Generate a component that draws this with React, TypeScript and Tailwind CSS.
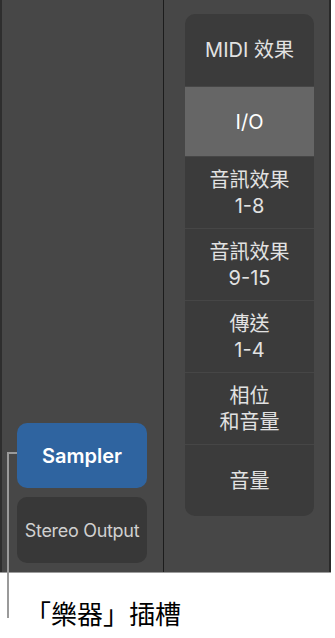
import React from "react"

const font = { fontFamily: 'Inter, "Noto Sans CJK TC", sans-serif' }

interface Slot {
  lines: string[]
  active?: boolean
}

const slots: Slot[] = [
  { lines: ["MIDI 效果"] },
  { lines: ["I/O"], active: true },
  { lines: ["音訊效果", "1-8"] },
  { lines: ["音訊效果", "9-15"] },
  { lines: ["傳送", "1-4"] },
  { lines: ["相位", "和音量"] },
  { lines: ["音量"] },
]

export default function App() {
  return (
    <div className="relative w-[335px] h-[638px] bg-white overflow-hidden" style={font}>
      {/* mixer strip */}
      <div className="flex h-[573px] w-[331px] border-b border-[#9c9c9c]">
        <div className="w-[2px] bg-[#2e2e2e]" />
        <div className="flex w-[161px] flex-col justify-end bg-[#474747] pb-[9px] pl-[15px]">
          <div className="flex h-[65px] w-[130px] items-center justify-center rounded-[10px] bg-[#2f64a0] text-[20px] font-semibold text-white">
            Sampler
          </div>
          <div className="mt-[9px] flex h-[66px] w-[130px] items-center justify-center rounded-[10px] bg-[#383838] text-[18px] tracking-[-0.3px] text-[#d0d0d0]">
            Stereo Output
          </div>
        </div>
        <div className="w-[1px] bg-[#1c1c1c]" />
        <div className="flex-1 bg-[#474747] pl-[21px] pt-[14px]">
          <div className="w-[129px] overflow-hidden rounded-[10px] bg-[#3b3b3b]">
            {slots.map((s, i) => (
              <div
                key={i}
                className={
                  "flex flex-col items-center justify-center text-[20px] leading-[26px] " +
                  (i > 0 ? "border-t border-[#464646] " : "") +
                  (s.active ? "h-[70px] bg-[#666666] text-white" : "h-[72px] text-[#e2e2e2]")
                }
              >
                {s.lines.map((l) => (
                  <span key={l}>{l}</span>
                ))}
              </div>
            ))}
          </div>
        </div>
        <div className="w-[2px] bg-[#2a2a2a]" />
      </div>

      {/* callout */}
      <div className="absolute left-[7px] top-[452px] h-[2px] w-[10px] bg-[#9a9a9a]" />
      <div className="absolute left-[7px] top-[452px] h-[166px] w-[2px] bg-[#9a9a9a]" />
      <div className="absolute left-[25px] top-[598px] text-[26px] leading-[34px] text-black">
        「樂器」插槽
      </div>
    </div>
  )
}
